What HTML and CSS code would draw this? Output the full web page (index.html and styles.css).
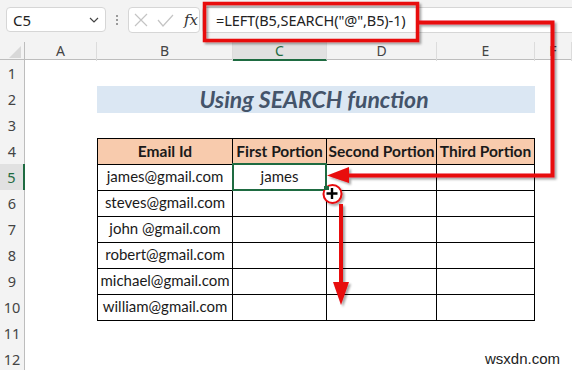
FILE: index.html
```html
<!DOCTYPE html>
<html lang="en">
<head>
    <meta charset="UTF-8">
    <meta name="viewport" content="width=device-width, initial-scale=1.0">
    <title>Using SEARCH function</title>
    <link rel="stylesheet" href="styles.css">
</head>
<body>
    <div class="toolbar">
        <div class="namebox">
            <span>C5</span>
            <svg width="10" height="6" viewBox="0 0 10 6"><path d="M1 1 L5 5 L9 1" fill="none" stroke="#444" stroke-width="1.2"/></svg>
        </div>
        <div class="grip"><i></i><i></i><i></i></div>
        <div class="fxbox">
            <svg width="14" height="14" viewBox="0 0 14 14"><path d="M1 1 L13 13 M13 1 L1 13" stroke="#c4c4c4" stroke-width="1.2"/></svg>
            <svg width="17" height="13" viewBox="0 0 17 13"><path d="M1 6 L6 12 L16 1" fill="none" stroke="#c4c4c4" stroke-width="1.2"/></svg>
            <span class="fx">fx</span>
        </div>
        <div class="formula">=LEFT(B5,SEARCH("@",B5)-1)</div>
    </div>

    <div class="sheet">
        <div class="row colheads">
            <div class="corner"></div>
            <div>A</div><div>B</div><div class="active">C</div><div>D</div><div>E</div><div>F</div>
        </div>

        <div class="row"><div class="rh">1</div></div>

        <div class="row">
            <div class="rh">2</div><div></div>
            <div class="title">Using SEARCH function</div>
        </div>

        <div class="row"><div class="rh">3</div></div>

        <div class="row">
            <div class="rh">4</div><div></div>
            <div class="td th first top">Email Id</div>
            <div class="td th top">First Portion</div>
            <div class="td th top">Second Portion</div>
            <div class="td th top">Third Portion</div>
        </div>

        <div class="row">
            <div class="rh active">5</div><div></div>
            <div class="td first">james@gmail.com</div>
            <div class="td selected">james</div>
            <div class="td"></div><div class="td"></div>
        </div>
        <div class="row">
            <div class="rh">6</div><div></div>
            <div class="td first">steves@gmail.com</div>
            <div class="td"></div><div class="td"></div><div class="td"></div>
        </div>
        <div class="row">
            <div class="rh">7</div><div></div>
            <div class="td first">john @gmail.com</div>
            <div class="td"></div><div class="td"></div><div class="td"></div>
        </div>
        <div class="row">
            <div class="rh">8</div><div></div>
            <div class="td first">robert@gmail.com</div>
            <div class="td"></div><div class="td"></div><div class="td"></div>
        </div>
        <div class="row">
            <div class="rh">9</div><div></div>
            <div class="td first">michael@gmail.com</div>
            <div class="td"></div><div class="td"></div><div class="td"></div>
        </div>
        <div class="row">
            <div class="rh">10</div><div></div>
            <div class="td first">william@gmail.com</div>
            <div class="td"></div><div class="td"></div><div class="td"></div>
        </div>

        <div class="row"><div class="rh">11</div></div>
        <div class="row"><div class="rh">12</div></div>
    </div>

    <!-- red callouts drawn over the sheet -->
    <svg class="callouts" width="572" height="370" viewBox="0 0 572 370">
        <defs>
            <filter id="shade" x="-10%" y="-10%" width="130%" height="130%">
                <feDropShadow dx="2" dy="2" stdDeviation="1.2" flood-color="#000" flood-opacity="0.35"/>
            </filter>
        </defs>
        <g filter="url(#shade)" fill="#e8090f" stroke="#e8090f">
            <rect x="204.5" y="3.5" width="213" height="37" fill="none" stroke-width="3.5"/>
            <polyline points="418,22.5 552.5,22.5 552.5,175.5 344,175.5" fill="none" stroke-width="4"/>
            <polygon points="327,175.5 349,167 349,183" stroke="none"/>
            <line x1="341" y1="204" x2="341" y2="285" stroke-width="4"/>
            <polygon points="333,282 349,282 341,305" stroke="none"/>
            <circle cx="332.5" cy="194" r="9" fill="#fff" stroke-width="2"/>
        </g>
        <rect x="324" y="186" width="5" height="4" fill="#1e6b41"/>
        <path d="M332 188 V199 M326.5 193.5 H337.5" stroke="#000" stroke-width="2.4"/>
    </svg>

    <div class="watermark">wsxdn.com</div>
</body>
</html>
```

FILE: styles.css
```css
* {
    margin: 0;
    padding: 0;
    box-sizing: border-box;
}

body {
    width: 572px;
    height: 370px;
    overflow: hidden;
    position: relative;
    background: #fff;
    font-family: 'Noto Sans', 'Open Sans', sans-serif;
    color: #222;
}

/* ---- formula bar ---- */

.toolbar {
    height: 42px;
    background: #f3f3f3;
    display: flex;
    align-items: flex-start;
    padding-top: 7px;
    padding-left: 6px;
}

.namebox {
    width: 100px;
    height: 25px;
    background: #fff;
    border: 1px solid #d6d6d6;
    border-radius: 4px;
    display: flex;
    align-items: center;
    justify-content: space-between;
    padding: 0 6px 0 6px;
    font-size: 15px;
}

.grip {
    width: 22px;
    height: 25px;
    display: flex;
    flex-direction: column;
    align-items: center;
    justify-content: center;
    gap: 2px;
}

.grip i {
    width: 2px;
    height: 2px;
    background: #9a9a9a;
}

.fxbox {
    width: 72px;
    height: 26px;
    background: #fff;
    border: 1px solid #d6d6d6;
    border-radius: 4px;
    display: flex;
    align-items: center;
    gap: 9px;
    padding-left: 5px;
}

.fx {
    font-family: 'DejaVu Serif', 'Liberation Serif', serif;
    font-style: italic;
    font-size: 15px;
    color: #333;
    margin-left: 1px;
}

.formula {
    flex: 1;
    height: 26px;
    margin-left: 2px;
    background: #fff;
    border: 1px solid #d6d6d6;
    border-right: none;
    border-radius: 4px 0 0 4px;
    padding-left: 13px;
    font-size: 14.5px;
    line-height: 24px;
    letter-spacing: -0.1px;
}

/* ---- sheet ---- */

.row {
    display: grid;
    grid-template-columns: 25px 72px 136px 94px 110px 98px 1fr;
    height: 26px;
}

.colheads {
    height: 18px;
    background: #f3f3f3;
    border-bottom: 1px solid #bdbdbd;
    font-size: 14px;
    color: #444;
    line-height: 17px;
}

.colheads div {
    text-align: center;
    border-right: 1px solid #dcdcdc;
}

.colheads .corner {
    position: relative;
    border-right: 1px solid #bdbdbd;
}

.colheads .corner::after {
    content: '';
    position: absolute;
    right: 3px;
    bottom: 3px;
    border-left: 12px solid transparent;
    border-bottom: 12px solid #d8d8d8;
}

.colheads .active {
    background: #e1e1e1;
    color: #1e6b41;
    border-bottom: 2px solid #1e6b41;
}

.rh {
    background: #f3f3f3;
    border-right: 1px solid #bdbdbd;
    border-bottom: 1px solid #e1e1e1;
    text-align: center;
    font-size: 14.5px;
    line-height: 26px;
    color: #444;
}

.rh.active {
    background: #e1e1e1;
    color: #1e6b41;
    border-right: 2px solid #1e6b41;
}

.title {
    grid-column: span 4;
    background: #dbe7f3;
    color: #44546a;
    font-family: Lato, 'Open Sans', sans-serif;
    font-weight: 700;
    font-style: italic;
    font-size: 23px;
    line-height: 26px;
    text-align: center;
    padding-right: 4px;
}

.td {
    border-right: 1px solid #000;
    border-bottom: 1px solid #000;
    font-family: Lato, 'Open Sans', sans-serif;
    font-size: 15px;
    line-height: 25px;
    text-align: center;
    white-space: nowrap;
    color: #1a1a1a;
}

.td.first {
    border-left: 1px solid #000;
}

.td.top {
    border-top: 1px solid #000;
    line-height: 24px;
}

.th {
    background: #f8cbad;
    font-weight: 700;
    font-size: 15.5px;
}

.selected {
    position: relative;
}

.selected::after {
    content: '';
    position: absolute;
    top: -1px;
    left: -1px;
    right: -1px;
    bottom: -1px;
    border: 2px solid #1e6b41;
}

/* ---- overlays ---- */

.callouts {
    position: absolute;
    top: 0;
    left: 0;
    pointer-events: none;
}

.watermark {
    position: absolute;
    right: 12px;
    bottom: 3px;
    font-family: 'Liberation Sans', Arial, sans-serif;
    font-size: 15px;
    color: #222;
}
```
